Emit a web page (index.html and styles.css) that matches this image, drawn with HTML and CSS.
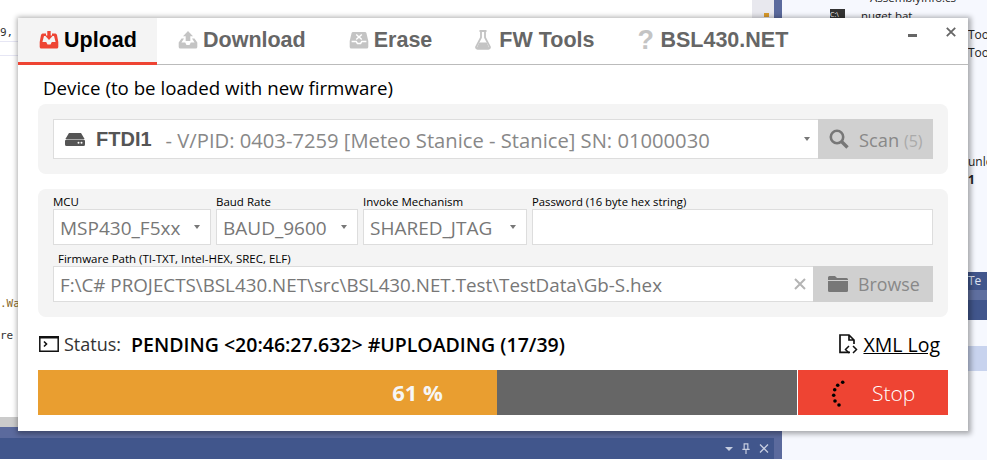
FILE: index.html
```html
<!DOCTYPE html>
<html lang="en">
<head>
  <meta charset="UTF-8">
  <meta name="viewport" content="width=device-width, initial-scale=1.0">
  <title>BSL430.NET</title>
  <link rel="stylesheet" href="styles.css">
</head>
<body>

<div class="desktop">
  <div class="ideMain">
    <div class="ideTop">
      <div class="code">
        <div class="codeLine lineA">9,</div>
        <div class="codeRule"></div>
        <div class="codeLine lineB">.Wa</div>
        <div class="codeLine lineC">re</div>
      </div>
      <div class="scrollStrip"><i class="scrollMark"></i></div>
      <div class="ideEdge"></div>
    </div>
    <div class="grayStrip"></div>
    <div class="bluePanel">
      <div class="panelTools">
        <span class="panelDrop"></span>
        <svg class="panelIcon" viewBox="0 0 10 12"><path d="M3 1h4v6H3zM1 7h8M5 7v5" fill="none" stroke="#c6cde0" stroke-width="1.3"/></svg>
        <svg class="panelIcon" viewBox="0 0 10 10"><path d="M1 1l8 8M9 1l-8 8" fill="none" stroke="#c6cde0" stroke-width="1.3"/></svg>
      </div>
    </div>
  </div>
  <div class="ideSide">
    <div class="treeRow rowTopA"><i class="dotRed"></i><i class="dotGreen"></i>AssemblyInfo.cs</div>
    <div class="treeRow rowTopB"><span class="batIcon">C:\</span>nuget.bat</div>
    <div class="sideRight">
      <div class="sideText">Too</div>
      <div class="sideText">Too</div>
      <div class="sideText sideGap">unlo</div>
      <div class="sideText sideBold">1</div>
      <div class="sideTab"><span>Te</span></div>
      <div class="sideBar"></div>
      <div class="sideSel"></div>
    </div>
  </div>
</div>

<div class="window">
  <div class="tabs">
    <div class="tab active">
      <svg class="tabIcon" viewBox="0 0 20 18"><path d="M3.500 2.500H7V5H5L3.400 11H7.200L8.500 13.500H11.500L12.800 11H16.600L15 5H13V2.500H16.500Q17.500 2.500 18 4L19.300 11V16A1.600 1.600 0 0 1 17.700 17.600H2.300A1.600 1.600 0 0 1 .7 16V11L2 4Q2.500 2.500 3.500 2.500Z" fill="#ee4433"/><path d="M8.300 0h3.400v4.500h2.300l-4 4.500-4-4.500h2.300z" fill="#ee4433"/></svg>
      Upload
    </div>
    <div class="tab">
      <svg class="tabIcon" viewBox="0 0 20 18"><path d="M10 0l5 5.200h-2.700V10H7.700V5.200H5z" fill="#c4c4c4"/><path d="M3.500 7.500L.7 11.600V16a1.600 1.600 0 0 0 1.600 1.600h15.400a1.600 1.600 0 0 0 1.600-1.600v-4.400L16.500 7.500H14l2.600 4H12.800L11.500 14h-3L7.200 11.500H3.400l2.600-4z" fill="#c4c4c4"/></svg>
      Download
    </div>
    <div class="tab">
      <svg class="tabIcon" viewBox="0 0 20 18"><path d="M4 1h12a1.500 1.500 0 0 1 1.400 1L19.300 10v6A1.600 1.600 0 0 1 17.700 17.600H2.300A1.600 1.600 0 0 1 .7 16V10L2.600 2A1.500 1.500 0 0 1 4 1z" fill="#c4c4c4"/><path d="M2.600 10.400h4.600l1.200 2h3.200l1.200-2h4.600M7.200 3.500l5.600 5M12.800 3.500l-5.600 5" fill="none" stroke="#fff" stroke-width="1.500"/></svg>
      Erase
    </div>
    <div class="tab">
      <svg class="tabIcon flask" viewBox="0 0 16 20"><path d="M4.500 1h7M6 1v6.500L1.200 16.600A1.500 1.500 0 0 0 2.500 18.800h11a1.500 1.500 0 0 0 1.300-2.200L10 7.500V1" fill="none" stroke="#c4c4c4" stroke-width="1.800"/><path d="M4.300 12.500h7.400l2.500 5.500H1.800z" fill="#c4c4c4"/></svg>
      FW Tools
    </div>
    <div class="tab">
      <span class="tabHelp">?</span>
      BSL430.NET
    </div>
    <div class="windowBtns">
      <span class="btnMin"></span>
      <svg class="btnClose" viewBox="0 0 10 10"><path d="M.8.800l8.400 8.400M9.200.800L.8 9.200" fill="none" stroke="#666" stroke-width="1.800"/></svg>
    </div>
  </div>

  <div class="content">
    <div class="heading">Device (to be loaded with new firmware)</div>

    <div class="panel devicePanel">
      <div class="deviceSelect">
        <svg class="driveIcon" viewBox="0 0 20 13"><path d="M4 0h12l3.600 6H.4z" fill="#555"/><path d="M1.500 6.500h17A1.500 1.500 0 0 1 20 8v3.500A1.500 1.500 0 0 1 18.500 13h-17A1.500 1.500 0 0 1 0 11.500V8a1.500 1.500 0 0 1 1.500-1.500z" fill="#555"/><circle cx="13.500" cy="9.800" r="1" fill="#fff"/><circle cx="16.500" cy="9.800" r="1" fill="#fff"/></svg>
        <span class="deviceName">FTDI1</span>
        <span class="deviceInfo">- V/PID: 0403-7259 [Meteo Stanice - Stanice] SN: 01000030</span>
        <span class="caret deviceCaret"></span>
      </div>
      <div class="sideBtn scanBtn">
        <svg class="btnIcon" viewBox="0 0 20 20"><circle cx="8" cy="8" r="6.200" fill="none" stroke="#777" stroke-width="2.600"/><path d="M12.500 12.500L18.500 18.500" stroke="#777" stroke-width="3.400"/></svg>
        <span>Scan <span class="scanCount">(5)</span></span>
      </div>
    </div>

    <div class="panel optionsPanel">
      <div class="fieldRow">
        <div class="field mcuField">
          <label class="fieldLabel">MCU</label>
          <div class="control">MSP430_F5xx<span class="caret"></span></div>
        </div>
        <div class="field baudField">
          <label class="fieldLabel">Baud Rate</label>
          <div class="control">BAUD_9600<span class="caret"></span></div>
        </div>
        <div class="field invokeField">
          <label class="fieldLabel">Invoke Mechanism</label>
          <div class="control">SHARED_JTAG<span class="caret"></span></div>
        </div>
        <div class="field passField">
          <label class="fieldLabel passLabel">Password (16 byte hex string)</label>
          <div class="control"></div>
        </div>
      </div>
      <label class="fieldLabel pathLabel">Firmware Path (TI-TXT, Intel-HEX, SREC, ELF)</label>
      <div class="pathRow">
        <div class="control pathInput">F:\C# PROJECTS\BSL430.NET\src\BSL430.NET.Test\TestData\Gb-S.hex
          <svg class="clearIcon" viewBox="0 0 12 12"><path d="M1 1l10 10M11 1L1 11" fill="none" stroke="#b4b4b4" stroke-width="2"/></svg>
        </div>
        <div class="sideBtn browseBtn">
          <svg class="btnIcon" viewBox="0 0 20 16"><path d="M1.500 0h5.500l2 2h9.500A1.500 1.500 0 0 1 20 3.500V4H0V1.500A1.500 1.500 0 0 1 1.500 0z" fill="#777"/><path d="M0 5h20v9.500a1.500 1.500 0 0 1-1.500 1.500h-17A1.500 1.500 0 0 1 0 14.500z" fill="#777"/></svg>
          Browse
        </div>
      </div>
    </div>

    <div class="statusRow">
      <svg class="consoleIcon" viewBox="0 0 20 16"><path d="M.8.800h18.400v14.400H.8z" fill="none" stroke="#111" stroke-width="1.500"/><path d="M0 0h20v2.500H0z" fill="#111"/><path d="M5 5.500l2.500 2.500L5 10.500" fill="none" stroke="#111" stroke-width="1.600"/></svg>
      <span class="statusLabel">Status:</span>
      <span class="statusText">PENDING &lt;20:46:27.632&gt; #UPLOADING (17/39)</span>
      <svg class="logIcon" viewBox="0 0 20 20"><path d="M12 18.300H2V1h9l5 5v4M11 1v5h5" fill="none" stroke="#111" stroke-width="1.700"/><path d="M11 12l-3.500 3.500L11 19M15 12l3.500 3.500L15 19" fill="none" stroke="#111" stroke-width="1.500"/></svg>
      <a class="logLink">XML Log</a>
    </div>

    <div class="progressRow">
      <div class="track">
        <div class="fill" style="width: 60.5%"></div>
        <span class="percent">61 %</span>
      </div>
      <div class="stopBtn">
        <svg class="spinner" viewBox="0 0 14 26">
          <circle cx="10.700" cy="2.300" r="1.800"/><circle cx="5.700" cy="5.300" r="1.800"/><circle cx="2.700" cy="9.700" r="1.800"/>
          <circle cx="1.700" cy="15.300" r="1.800"/><circle cx="3" cy="21" r="1.800"/><circle cx="7" cy="25" r="1.800"/>
        </svg>
        <span class="stopText">Stop</span>
      </div>
    </div>
  </div>
</div>

</body>
</html>
```

FILE: styles.css
```css
html, body {
  margin: 0;
  height: 100%;
  overflow: hidden;
  background-color: #fff;
}

body {
  font-family: "Open Sans", "Noto Sans", sans-serif;
  color: #000;
}

/* the IDE left behind the window */
.desktop {
  display: grid;
  grid-template-columns: 782px 1fr;
  width: 987px;
  height: 460px;
}

.ideMain {
  display: flex;
  flex-direction: column;
}

.ideTop {
  display: flex;
  height: 417px;
}

.code {
  flex: 1;
  background-color: #fff;
  font-family: "DejaVu Sans Mono", monospace;
  font-size: 11px;
  color: #333;
}

.codeLine {
  line-height: 14px;
}

.codeRule {
  height: 13px;
  margin-top: 1px;
  border-top: 1px solid #e6e6f4;
  border-bottom: 1px solid #e6e6f4;
}

.lineA { margin-top: 26px; }
.lineB { margin-top: 241px; color: #8a6a2a; }
.lineC { margin-top: 18px; }

.scrollStrip {
  width: 22px;
  background-color: #e8e8ee;
}

.scrollMark {
  display: block;
  width: 5px;
  height: 4px;
  margin: 13px 0 0 12px;
  background-color: #d99a2b;
}

.ideEdge {
  width: 8px;
  background-color: #5b6a9d;
}

.grayStrip {
  height: 10px;
  background-color: #cbcbcb;
}

.bluePanel {
  height: 32px;
  box-sizing: border-box;
  background-color: #5b6a9d;
  padding-top: 11px;
}

.panelTools {
  display: flex;
  align-items: center;
  justify-content: flex-end;
  gap: 8px;
  height: 21px;
  padding-right: 5px;
  background-color: #41568c;
  border-right: 8px solid #5b6a9d;
}

.panelDrop {
  width: 0;
  height: 0;
  border-left: 4px solid transparent;
  border-right: 4px solid transparent;
  border-top: 4px solid #c6cde0;
}

.panelIcon {
  width: 10px;
  height: 11px;
}

.ideSide {
  position: relative;
  background-color: #f6f8fe;
  font-size: 11.500px;
  color: #222;
}

.treeRow {
  display: flex;
  align-items: center;
  height: 18px;
}

.rowTopA {
  margin-top: -12px;
  padding-left: 60px;
}

.rowTopB {
  padding-left: 48px;
}

.dotRed, .dotGreen {
  width: 3px;
  height: 3px;
  margin-right: 6px;
}

.dotRed { background-color: #d33; }
.dotGreen { background-color: #4a4; margin-right: 16px; }

.batIcon {
  width: 15px;
  height: 12px;
  margin-right: 16px;
  background-color: #333;
  color: #fff;
  font-size: 7px;
  line-height: 12px;
}

.sideRight {
  margin: 2px 0 0 186px;
  font-size: 12px;
}

.sideText {
  height: 18px;
  line-height: 18px;
  white-space: nowrap;
  overflow: hidden;
}

.sideGap { margin-top: 91px; }
.sideBold { font-weight: bold; }

.sideTab {
  margin-top: 83px;
  height: 18px;
  background-color: #41568c;
  color: #dfe4f2;
  line-height: 18px;
}

.sideBar {
  height: 30px;
  background: linear-gradient(#5f6f9f 0, #5f6f9f 10px, #41568c 10px);
}

.sideSel {
  height: 25px;
  margin-top: 26px;
  background-color: #c8d3ee;
}

/* window */
.window {
  position: absolute;
  left: 18px;
  top: 18px;
  display: flex;
  flex-direction: column;
  width: 950px;
  height: 413px;
  background-color: #fff;
  box-shadow: 1px 1px 5px 2px rgba(0, 0, 0, 0.32);
}

.tabs {
  display: flex;
  height: 47px;
  box-sizing: border-box;
  border-bottom: 1px solid #bbb;
  font-family: "Liberation Sans", Arial, sans-serif;
  font-weight: bold;
  font-size: 21.500px;
  color: #666;
}

.tab {
  display: flex;
  align-items: center;
  gap: 5px;
  padding: 0 21px;
  margin-right: 1px;
  height: 47px;
  box-sizing: border-box;
  border-bottom: 3px solid transparent;
}

.tab.active {
  width: 139px;
  padding-right: 0;
  margin-right: 0;
  color: #000;
  background-color: #f4f4f4;
  border-bottom-color: #ee4433;
}

.tabIcon {
  width: 20px;
  height: 18px;
}

.tabIcon.flask {
  width: 16px;
  height: 20px;
  margin-right: 3px;
}

.tabHelp {
  color: #c4c4c4;
  font-size: 27px;
  width: 18px;
}

.windowBtns {
  display: flex;
  align-items: flex-start;
  margin-left: auto;
  padding: 9px 12px 0 0;
  gap: 29px;
}

.btnMin {
  width: 9px;
  height: 3px;
  margin-top: 7px;
  background-color: #666;
}

.btnClose {
  width: 10px;
  height: 10px;
}

.content {
  padding: 0 20px;
}

.heading {
  height: 39px;
  box-sizing: border-box;
  padding: 9px 0 0 5px;
  font-size: 18.700px;
  line-height: 27px;
}

.panel {
  background-color: #f4f4f4;
  border-radius: 8px;
  padding: 15px;
}

.devicePanel {
  display: flex;
  height: 70px;
  box-sizing: border-box;
  margin-bottom: 15px;
}

.deviceSelect {
  display: flex;
  align-items: center;
  flex: 1;
  position: relative;
  background-color: #fff;
  border: 1px solid #ddd;
  border-right: none;
  padding-left: 11px;
  font-size: 20.200px;
  white-space: nowrap;
}

.driveIcon {
  width: 20px;
  height: 13px;
  margin-right: 11px;
}

.deviceName {
  font-family: "Liberation Sans", sans-serif;
  font-weight: bold;
  font-size: 20px;
  color: #555;
  margin-right: 14px;
}

.deviceInfo {
  color: #888;
  padding-top: 2px;
}

.caret {
  position: absolute;
  right: 10px;
  top: 50%;
  margin-top: -2px;
  width: 0;
  height: 0;
  border-left: 3.500px solid transparent;
  border-right: 3.500px solid transparent;
  border-top: 4px solid #777;
}

.deviceCaret {
  right: 8px;
}

.sideBtn {
  display: flex;
  align-items: center;
  background-color: #d0d0d0;
  color: #888;
  box-sizing: border-box;
  white-space: nowrap;
}

.scanBtn {
  width: 115px;
  padding-left: 11px;
  gap: 10px;
  font-size: 18.300px;
}

.scanBtn span {
  padding-top: 1px;
}

.scanCount {
  color: #aaa;
  font-size: 16px;
}

.btnIcon {
  width: 20px;
  height: 20px;
}

.browseBtn {
  width: 120px;
  padding-left: 15px;
  gap: 10px;
  font-size: 17.800px;
}

.browseBtn .btnIcon {
  height: 16px;
}

.optionsPanel {
  height: 128px;
  box-sizing: border-box;
  padding: 6px 15px 0;
}

.fieldRow {
  display: flex;
  gap: 5px;
}

.field {
  display: flex;
  flex-direction: column;
}

.mcuField { width: 158px; }
.baudField { width: 142px; }
.invokeField { width: 164px; }
.passField { flex: 1; }

.fieldLabel {
  display: block;
  height: 14px;
  font-size: 11.500px;
  line-height: 13px;
  white-space: nowrap;
}

.passLabel {
  font-size: 11.300px;
}

.control {
  position: relative;
  display: flex;
  align-items: center;
  height: 36px;
  box-sizing: border-box;
  padding: 2px 0 0 6px;
  background-color: #fff;
  border: 1px solid #ddd;
  color: #777;
  font-size: 19px;
  white-space: nowrap;
}

.pathLabel {
  padding: 7px 0 0 5px;
  height: 21px;
  box-sizing: border-box;
}

.pathRow {
  display: flex;
  height: 36px;
}

.pathInput {
  flex: 1;
  font-size: 18.800px;
  border-right: none;
}

.clearIcon {
  position: absolute;
  right: 7px;
  top: 11px;
  width: 12px;
  height: 12px;
}

.statusRow {
  display: flex;
  align-items: center;
  height: 53px;
  box-sizing: border-box;
  padding: 1px 8px 0 1px;
  font-size: 18px;
}

.consoleIcon {
  width: 20px;
  height: 16px;
  margin-right: 5px;
}

.statusLabel {
  color: #333;
  margin-right: 10px;
}

.statusText {
  font-weight: 600;
  font-size: 19.500px;
}

.logIcon {
  width: 20px;
  height: 20px;
  margin-left: auto;
  margin-right: 5px;
}

.logLink {
  color: #000;
  text-decoration: underline;
  font-size: 19.500px;
}

.progressRow {
  display: flex;
  height: 45px;
}

.track {
  position: relative;
  flex: 1;
  background-color: #666;
  margin-right: 1px;
}

.fill {
  height: 100%;
  background-color: #e99e30;
}

.percent {
  position: absolute;
  left: 0;
  right: 0;
  top: 9px;
  text-align: center;
  color: #f6f6f6;
  font-weight: bold;
  font-size: 22px;
  line-height: 27px;
}

.stopBtn {
  display: flex;
  align-items: center;
  width: 150px;
  box-sizing: border-box;
  padding-left: 34px;
  background-color: #ee4433;
}

.spinner {
  width: 14px;
  height: 28px;
  margin-right: 26px;
  overflow: visible;
}

.stopText {
  color: #fff;
  font-size: 21px;
  font-weight: 300;
}
```
